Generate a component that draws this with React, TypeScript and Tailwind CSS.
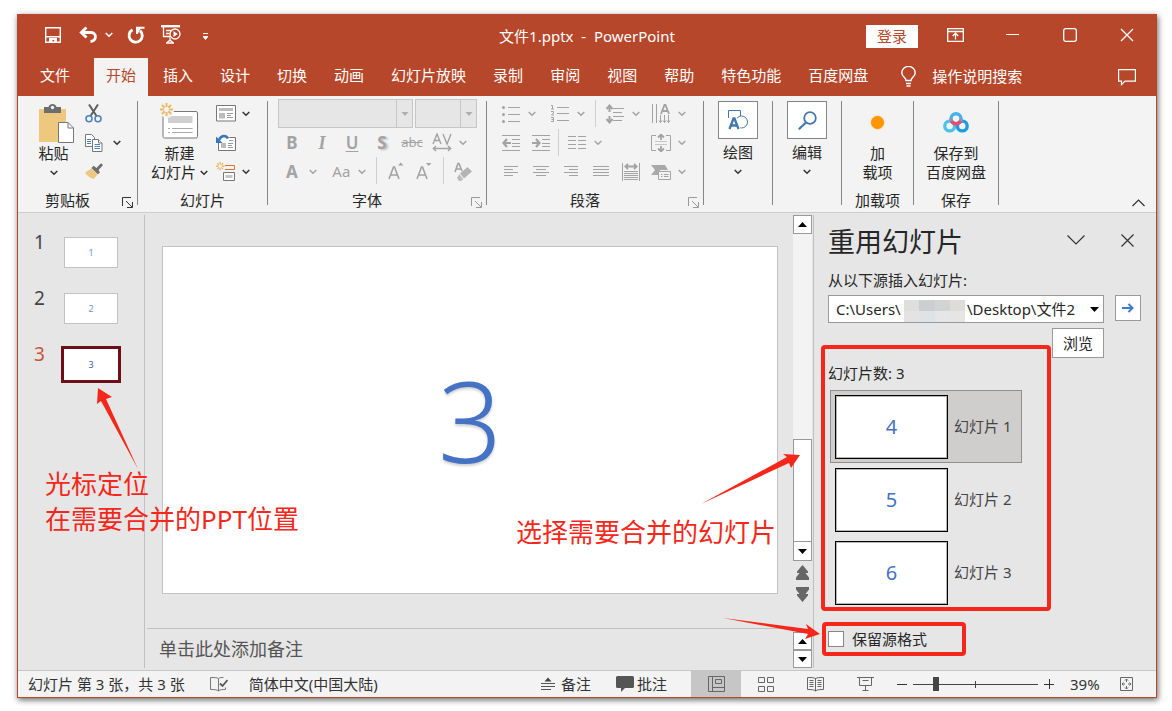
import React from 'react';

type IconProps = { className?: string };

const tabs = ['插入', '设计', '切换', '动画', '幻灯片放映', '录制', '审阅', '视图', '帮助', '特色功能', '百度网盘'];
const thumbnails = [1, 2, 3];
const sourceSlides = [
  { digit: 4, label: '幻灯片 1', selected: true },
  { digit: 5, label: '幻灯片 2', selected: false },
  { digit: 6, label: '幻灯片 3', selected: false },
];
const sourcePath = 'C:\\Users\\' + '\u00a0'.repeat(17) + '\\Desktop\\文件2';

const Chevron: React.FC<IconProps> = ({ className = 'text-[#333]' }) => (
  <svg className={className} width="8" height="6" viewBox="0 0 8 6" fill="none" stroke="currentColor" strokeWidth="1.5">
    <path d="M.7 1 4 4.3 7.3 1" />
  </svg>
);

const Triangle: React.FC<{ up?: boolean; className?: string }> = ({ up, className = 'text-black' }) => (
  <svg className={className} width="9" height="5" viewBox="0 0 9 5" fill="currentColor">
    <path d={up ? 'M0 5 4.5 0 9 5z' : 'M0 0h9L4.5 5z'} />
  </svg>
);

const Launcher: React.FC<IconProps> = ({ className }) => (
  <svg className={className} width="11" height="11" viewBox="0 0 11 11" fill="none" stroke="currentColor">
    <path d="M.5 9V.5H9M4 4l6 6M10.5 5v5.5H5" />
  </svg>
);

const SaveIcon = () => (
  <svg width="16" height="16" viewBox="0 0 16 16" fill="none" stroke="#fff" strokeWidth="1.4">
    <path d="M.7.7h14.6v14.6H.7zM1 9.8h14" />
    <path d="M4 11h8v4.5H9.2v-2.500H7.5v2.500H4z" fill="#fff" stroke="none" />
  </svg>
);

const UndoIcon = () => (
  <svg width="19" height="17" viewBox="0 0 19 17" fill="none" stroke="#fff" strokeWidth="2.8">
    <path d="M2 6.5h10c6 0 6 8.5-.5 9" />
    <path d="M7.5 1.5 2.3 6.5l5.2 5" />
  </svg>
);

const RedoIcon = () => (
  <svg width="18" height="18" viewBox="0 0 18 18" fill="none" stroke="#fff" strokeWidth="2.8">
    <path d="M5.5 3.8A6.600 6.600 0 1 0 13 4.600" />
    <path d="M9 .8h8.500v2H13.500L10.800 8H9z" fill="#fff" stroke="none" />
  </svg>
);

const PresentIcon = () => (
  <svg width="20" height="19" viewBox="0 0 20 19" fill="none" stroke="#fff" strokeWidth="1.3">
    <path d="M0 1.2h19" strokeWidth="2.4" />
    <path d="M2.5 2v9.5H9M5 5.5h6M5 8.5h3.500M5 18h8M9 12.5v4M6 17.5l3-2.500 3 2.500" />
    <circle cx="14" cy="9" r="5" />
    <path d="M12.5 6v6l4.200-3z" fill="#fff" stroke="none" />
  </svg>
);

const ClipboardIcon = () => (
  <svg width="35" height="40" viewBox="0 0 35 40">
    <path d="M0 5h27v33H0z" fill="#edc87e" />
    <path d="M5 3h4.500a4.200 4.200 0 0 1 8 0H22v6H5z" fill="#6d6d6d" />
    <circle cx="13.5" cy="3.5" r="1.7" fill="#f3f3f3" />
    <path d="M19.5 18.5H29l5.500 5.500v14.500h-15z" fill="#fff" stroke="#777" />
    <path d="M29 18.5V24h5.500" fill="none" stroke="#777" />
  </svg>
);

const ScissorsIcon = () => (
  <svg width="17" height="19" viewBox="0 0 17 19" fill="none">
    <path d="M4 .5 11.5 12M13 .5 5.500 12" stroke="#5f5f5f" strokeWidth="2" />
    <circle cx="4" cy="14.8" r="3" stroke="#4a80bd" strokeWidth="1.5" />
    <circle cx="13" cy="14.8" r="3" stroke="#4a80bd" strokeWidth="1.5" />
  </svg>
);

const CopyIcon = () => (
  <svg width="18" height="18" viewBox="0 0 18 18" fill="#fff" stroke="#777">
    <path d="M.5.5h6l3 3v9h-9z" />
    <path d="M2 5.5h4M2 7.5h4M2 9.5h4" stroke="#4a80bd" />
    <path d="M7.5 5.5h6l3.500 3.500v8.500H7.500z" />
    <path d="M13.5 5.500V9H17" />
    <path d="M9.5 10.5h5.500M9.5 12.5h5.500M9.5 14.5h5.500" stroke="#4a80bd" />
  </svg>
);

const BrushIcon = () => (
  <svg width="18" height="17" viewBox="0 0 18 17">
    <path d="M0 9.5 6.500 5.500l6 6L8.500 16C5 15 2 12.500 0 9.500z" fill="#edc87e" />
    <path d="m6.500 5 2-2.200 3 2.200L15.500.7a1.500 1.500 0 0 1 2 2L13.500 7l1.500 2.500-2.200 1.800z" fill="#6d6d6d" />
  </svg>
);

const spark = 'M6.500 0v4M6.500 9v4M0 6.500h4M9 6.500h4M2 2l2.700 2.700M8.300 8.300 11 11M11 2 8.300 4.700M4.700 8.300 2 11';

const NewSlideIcon = () => (
  <svg width="38" height="41" viewBox="0 0 38 41" fill="none">
    <rect x="3" y="8.5" width="34.500" height="26.500" rx="1.5" fill="#fff" stroke="#777" />
    <path d="M8 13h24.500v7H8z" fill="#cfcfcf" />
    <path d="M8 25.5h2M12 25.5h20.500M8 29.5h2M12 29.5h20.500" stroke="#aaa" />
    <circle cx="7" cy="8" r="7" fill="#f3f3f3" />
    <path d={spark} stroke="#ecb964" strokeWidth="2" />
  </svg>
);

const LayoutIcon = () => (
  <svg width="20" height="17" viewBox="0 0 20 17" fill="none" stroke="#777">
    <path d="M.5.5h19v15.500H.5z" fill="#fff" />
    <path d="M3 3h14v3H3zM3 8h6v5.500H3z" fill="#bbb" stroke="none" />
    <path d="M11 8.5h6M11 10.5h4M11 12.5h6" stroke="#999" />
  </svg>
);

const ResetIcon = () => (
  <svg width="20" height="17" viewBox="0 0 20 17" fill="none">
    <path d="M2.5 3.500h17v13h-17z" fill="#fff" stroke="#777" />
    <path d="M5 9h5v5H5z" fill="#bbb" />
    <path d="M12 9.5h5M12 11.5h4M12 13.5h5M13 6.5h4" stroke="#999" />
    <path d="M2.5 6.500C5 .5 10 1 12 4.500" stroke="#f3f3f3" strokeWidth="4" />
    <path d="M3 6C5 .8 10 1 12 4.500" stroke="#3a76b8" strokeWidth="2.5" />
    <path d="M0 2.500V9h6.500z" fill="#3a76b8" />
  </svg>
);

const SectionIcon = () => (
  <svg width="20" height="20" viewBox="0 0 20 20" fill="none">
    <g transform="scale(.65)">
      <path d={spark} stroke="#ecb964" strokeWidth="2" />
    </g>
    <path d="M9 3.500h9.500v4H9" stroke="#d9762f" />
    <path d="M7.5 10.500h11v8h-11z" fill="#fff" stroke="#777" />
    <path d="M9.500 13h7v3h-7z" fill="#c4c4c4" />
  </svg>
);

const Lines: React.FC<{ rows: [number, number][] }> = ({ rows }) => (
  <svg width="18" height="14" viewBox="0 0 18 14" stroke="#a3a3a3">
    {rows.map(([from, to], i) => (
      <path key={i} d={`M${from} ${i * 3 + 1.5}H${to}`} />
    ))}
  </svg>
);

const BulletsIcon = () => (
  <svg width="18" height="18" viewBox="0 0 18 18" stroke="#a3a3a3">
    <path d="M6 2.5h12M6 9.5h12M6 16.5h12" />
    <g fill="#a3a3a3" stroke="none">
      <circle cx="1.5" cy="2.5" r="1.5" />
      <circle cx="1.5" cy="9.5" r="1.5" />
      <circle cx="1.5" cy="16.5" r="1.5" />
    </g>
  </svg>
);

const NumberingIcon = () => (
  <svg width="18" height="19" viewBox="0 0 18 19" fill="none" stroke="#a3a3a3">
    <path d="M6 3.5h12M6 9.5h12M6 16.5h12" />
    <path d="M0 1.5h1.500v3.500M0 5h3M0 7.5h2.500V9L.5 11H3M0 13.5h2.500v4H0M.5 15.500h2" />
  </svg>
);

const SpacingIcon = () => (
  <svg width="18" height="20" viewBox="0 0 18 20" fill="none" stroke="#a3a3a3">
    <path d="M7 4.5h11M7 8.5h9M7 12.5h11M7 16.5h9" />
    <path d="M3.5 3v5M.5 5l3-3.500 3 3.500M3.5 12v5M.5 15l3 3.500 3-3.500" strokeWidth="2" />
  </svg>
);

const DirectionIcon = () => (
  <svg width="20" height="20" viewBox="0 0 20 20" fill="none" stroke="#a3a3a3">
    <path d="M1.5 0v19M5.5 0v19M9.5 11v8M13.5 11v8M17.5 11v8M8 16.5l1.500 2 1.500-2M12 16.5l1.500 2 1.500-2M16 16.5l1.500 2 1.500-2" />
    <path d="m10 10 3.500-9h1L18 10M11.5 7h5" strokeWidth="1.8" />
  </svg>
);

const IndentIcon: React.FC<{ out?: boolean }> = ({ out }) => (
  <svg width="18" height="16" viewBox="0 0 18 16" fill="none" stroke="#a3a3a3">
    <path d="M0 .5h18M10 4.5h8M10 8.5h8M10 11.5h8M0 15.5h18" />
    <path d={out ? 'M9 8H1.500M5 4 1.500 8 5 12' : 'M0 8h7.500M4 4l3.500 4L4 12'} strokeWidth="2.2" />
  </svg>
);

const ColumnsIcon = () => (
  <svg width="18" height="14" viewBox="0 0 18 14" stroke="#a3a3a3">
    <path d="M0 .5h8M10 .5h8M0 4.5h8M10 4.5h8M0 8.5h8M10 8.5h8M0 12.5h8M10 12.5h8" />
  </svg>
);

const AlignTextIcon = () => (
  <svg width="20" height="18" viewBox="0 0 20 18" fill="none" stroke="#a3a3a3">
    <path d="M5 1.5H.5v15H5M15 1.5h4.500v15H15" />
    <path d="M4 7.5h12M4 10.5h12" stroke="#c6c6c6" />
    <path d="M10 1v5M10 12v5M7 3.500l3-3 3 3M7 14.500l3 3 3-3" strokeWidth="1.8" />
  </svg>
);

const DistributeIcon = () => (
  <svg width="18" height="18" viewBox="0 0 18 18" fill="none" stroke="#a3a3a3">
    <path d="M.5 0v18M17.5 0v18M2 8.5h14M2 10.5h14M2 12.5h14M2 14.5h14M2 16.5h14" />
    <path d="M3.500 3.500h11M6 .8 3.300 3.500 6 6.200M12 .8l2.700 2.700L12 6.200" strokeWidth="1.8" />
  </svg>
);

const SmartArtIcon = () => (
  <svg width="20" height="16" viewBox="0 0 20 16" fill="none" stroke="#a3a3a3">
    <path d="M0 1h14l3 5H9v5H0l4-5z" fill="#a9a9a9" stroke="none" />
    <path d="M7.5 7.500h12v8h-12z" fill="#f3f3f3" />
    <path d="M10 10.5h1.500M13 10.5h4.500M10 12.5h1.500M13 12.5h4.500" />
  </svg>
);

const EraserIcon = () => (
  <svg width="18" height="20" viewBox="0 0 18 20" fill="none">
    <path d="m1 10 3-8.500h1L8 9M2.300 7h4.500" stroke="#a3a3a3" strokeWidth="1.6" />
    <path d="m6 11.500 7.500-6.500 4.500 4.500-8 7z" fill="#b4b4b4" />
    <path d="m5.200 12.200 4 5-2 1.800H5l-2-3z" fill="#bcbcbc" />
  </svg>
);

const ShapesIcon = () => (
  <svg width="20" height="20" viewBox="0 0 20 20" fill="none" stroke="#4477ac">
    <path d="M.5 8V.5h12V6" />
    <circle cx="13.500" cy="12" r="6" fill="#fff" />
    <path d="m1.500 19 4-10.500h1l4 10.500M3 15.500h6" stroke="#fff" strokeWidth="4.5" />
    <path d="m1.500 19 4-10.500h1l4 10.500M3 15.500h6" strokeWidth="2.3" />
  </svg>
);

const SearchIcon = () => (
  <svg width="19" height="19" viewBox="0 0 19 19" fill="none" stroke="#4477ac" strokeWidth="1.8">
    <circle cx="12" cy="7" r="5.8" />
    <path d="M8 11.500.8 18.200" strokeWidth="2.2" />
  </svg>
);

const NetdiskIcon = () => (
  <svg width="26" height="21" viewBox="0 0 26 21" fill="none" strokeWidth="3.4">
    <circle cx="6.700" cy="14" r="4.900" stroke="#4cc3ec" />
    <circle cx="19.300" cy="14" r="4.900" stroke="#1f9be3" />
    <circle cx="13" cy="6.800" r="5" stroke="#45b3ea" />
    <path d="M8.500 9a5 5 0 0 0 9 0" stroke="#ee4b68" />
    <path d="M8 6.800a5 5 0 0 0 .5 2.200M17.500 9a5 5 0 0 0 .5-2.200" stroke="#a487b8" />
  </svg>
);

const DoubleArrow: React.FC<{ up?: boolean }> = ({ up }) => (
  <svg width="13" height="16" viewBox="0 0 13 16" fill="#666">
    <path
      d={
        up
          ? 'M6.500 0 12 6.500V8H9.500l3.500 4.500V15H0v-2.500L3.500 8H1V6.500z'
          : 'M6.500 16 12 9.500V8H9.500L13 3.500V1H0v2.500L3.500 8H1v1.500z'
      }
    />
  </svg>
);

const Divider = () => <span className="my-[5px] w-px shrink-0 bg-[#868686]" />;

const Separator = () => <span className="mx-[5px] h-[27px] w-px bg-[#cfcfcf]" />;

const Cell: React.FC<{ label: string; drop?: boolean; children: React.ReactNode }> = ({ label, drop, children }) => (
  <button type="button" aria-label={label} className="flex h-[29px] items-center text-[#a3a3a3]">
    <span className="flex w-7 justify-center">{children}</span>
    {drop && (
      <span className="flex w-[14px] justify-center">
        <Chevron className="text-[#a3a3a3]" />
      </span>
    )}
  </button>
);

const Group: React.FC<{ label?: string; launcher?: string; className: string; children: React.ReactNode }> = ({
  label,
  launcher,
  className,
  children,
}) => (
  <div className={className + ' flex shrink-0 flex-col'}>
    <div className="flex h-[94px] justify-center">{children}</div>
    <div className="flex h-5 items-center">
      <span className="flex-1 text-center">{label}</span>
      {launcher && (
        <button type="button" aria-label={label + '设置'} className={launcher + ' flex w-5 justify-center pt-1'}>
          <Launcher />
        </button>
      )}
    </div>
  </div>
);

const TitleBar = () => (
  <header className="grid h-[43px] grid-cols-[1fr_auto_1fr] items-center bg-[#b7472a] pb-1 text-white">
    <div className="flex items-center pl-[27px]">
      <button type="button" aria-label="保存"><SaveIcon /></button>
      <button type="button" aria-label="撤消" className="ml-[18px]"><UndoIcon /></button>
      <button type="button" aria-label="撤消列表" className="ml-[7px]"><Chevron className="text-white" /></button>
      <button type="button" aria-label="重做" className="ml-[14px]"><RedoIcon /></button>
      <button type="button" aria-label="从头开始放映" className="ml-4"><PresentIcon /></button>
      <button type="button" aria-label="自定义快速访问工具栏" className="ml-[22px] pt-1">
        <svg width="5" height="7" viewBox="0 0 5 7" fill="#fff">
          <path d="M0 0h5v1H0zM0 3h5v1L2.500 7 0 4z" />
        </svg>
      </button>
    </div>
    <h1 className="pt-[3px] whitespace-pre">文件1.pptx  -  PowerPoint</h1>
    <div className="flex items-center justify-end pr-[22px]">
      <button type="button" className="mt-1 mr-[29px] h-[23px] w-[52px] bg-white leading-[23px] text-[#b7472a]">登录</button>
      <button type="button" aria-label="功能区显示选项" className="mr-[42px]">
        <svg width="17" height="14" viewBox="0 0 17 14" fill="none" stroke="#fff" strokeWidth="1.3">
          <path d="M.7.7h15.600v12.600H.7zM1 3.500h15M8.500 11.500v-6M5.700 8l2.800-2.800L11.300 8" />
        </svg>
      </button>
      <button type="button" aria-label="最小化" className="mr-[44px]">
        <svg width="13" height="14" viewBox="0 0 13 14" stroke="#fff"><path d="M0 6.500h13" /></svg>
      </button>
      <button type="button" aria-label="最大化" className="mr-[43px]">
        <svg width="14" height="14" viewBox="0 0 14 14" fill="none" stroke="#fff" strokeWidth="1.3">
          <rect x=".7" y=".7" width="12.600" height="12.600" rx="2" />
        </svg>
      </button>
      <button type="button" aria-label="关闭">
        <svg width="14" height="14" viewBox="0 0 14 14" stroke="#fff" strokeWidth="1.3"><path d="m1 1 12 12M13 1 1 13" /></svg>
      </button>
    </div>
  </header>
);

const TabBar = () => (
  <nav className="flex h-[38px] items-stretch bg-[#b7472a] pl-[10px] text-white">
    <button type="button" className="mr-3 px-3 pb-[3px]">文件</button>
    <button type="button" className="mr-[3px] bg-[#f3f3f3] px-3 pb-[3px] text-[#b7472a]">开始</button>
    {tabs.map((tab) => (
      <button key={tab} type="button" className="mr-[3px] px-3 pb-[3px] whitespace-nowrap">{tab}</button>
    ))}
    <button type="button" className="ml-[18px] flex items-center gap-4 pb-0.5 whitespace-nowrap">
      <svg width="15" height="21" viewBox="0 0 15 21" fill="none" stroke="#fff" strokeWidth="1.4">
        <path d="M5 14.500c0-3-4.200-3.500-4.200-7.800a6.700 6.300 0 0 1 13.400 0c0 4.300-4.200 4.800-4.200 7.800zM5 17.500h5M5.500 20h4" />
      </svg>
      操作说明搜索
    </button>
    <button type="button" aria-label="批注" className="mr-5 ml-auto">
      <svg width="18" height="17" viewBox="0 0 18 17" fill="none" stroke="#fff" strokeWidth="1.2">
        <path d="M.6.6h16.800v11.500H7L3.500 15.500v-3.400H.6z" />
      </svg>
    </button>
  </nav>
);

const FontGroup = () => (
  <Group label="字体" launcher="text-[#999]" className="w-[218px]">
    <div className="w-full pt-[3px] pr-[9px] pl-[10px]">
      <div className="flex h-[29px] gap-0.5">
        <button type="button" aria-label="字体" className="flex flex-1 justify-end border border-[#c6c6c6] bg-[#e6e6e6]">
          <span className="flex h-full w-4 items-center justify-center border-l border-[#c6c6c6]">
            <Triangle className="h-1 w-2 text-[#b0b0b0]" />
          </span>
        </button>
        <button type="button" aria-label="字号" className="flex w-[62px] justify-end border border-[#c6c6c6] bg-[#e6e6e6]">
          <span className="flex h-full w-4 items-center justify-center border-l border-[#c6c6c6]">
            <Triangle className="h-1 w-2 text-[#b0b0b0]" />
          </span>
        </button>
      </div>
      <div className="flex gap-0.5 text-[17px]">
        <Cell label="加粗"><b>B</b></Cell>
        <Cell label="倾斜"><i className="font-['Liberation_Serif'] text-lg font-bold">I</i></Cell>
        <Cell label="下划线"><b className="font-semibold underline underline-offset-2">U</b></Cell>
        <Cell label="文字阴影"><b className="[text-shadow:2px_1px_2px_#bbb]">S</b></Cell>
        <Cell label="删除线"><s className="text-[13px]">abc</s></Cell>
        <Cell label="字符间距" drop>
          <svg width="20" height="19" viewBox="0 0 20 19" fill="none" stroke="#a3a3a3" strokeWidth="1.4">
            <path d="m1 11 4-10 4 10M2.300 7.500h5.400M11 1l4 10 4-10M1 15.500h18M4 13l-2.700 2.500L4 18M16 13l2.700 2.500L16 18" />
          </svg>
        </Cell>
      </div>
      <div className="flex text-[17px]">
        <Cell label="字体颜色" drop><b>A</b></Cell>
        <span className="w-2" />
        <Cell label="更改大小写" drop><span className="text-[15px]">Aa</span></Cell>
        <span className="w-0.5" />
        <Separator />
        <Cell label="增大字号">
          <svg width="16" height="19" viewBox="0 0 16 19" fill="none" stroke="#a3a3a3" strokeWidth="1.6">
            <path d="m1 17 4.500-12h1L11 17M2.500 13h7" />
            <path d="M10 3.500h5.500L12.700.5z" fill="#a3a3a3" stroke="none" />
          </svg>
        </Cell>
        <Cell label="减小字号">
          <svg width="16" height="19" viewBox="0 0 16 19" fill="none" stroke="#a3a3a3" strokeWidth="1.6">
            <path d="m1 17 4.500-12h1L11 17M2.500 13h7" />
            <path d="M10 1h5.500l-2.800 3z" fill="#a3a3a3" stroke="none" />
          </svg>
        </Cell>
        <Separator />
        <Cell label="清除格式"><EraserIcon /></Cell>
      </div>
    </div>
  </Group>
);

const ParagraphGroup = () => (
  <Group label="段落" launcher="text-[#999]" className="w-[216px]">
    <div className="flex w-full justify-between pt-[3px] pr-[14px] pl-[10px]">
      <div>
        <div className="flex items-center">
          <Cell label="项目符号" drop><BulletsIcon /></Cell>
          <span className="w-[7px]" />
          <Cell label="编号" drop><NumberingIcon /></Cell>
          <span className="w-0.5" />
          <Separator />
          <Cell label="行距" drop><SpacingIcon /></Cell>
        </div>
        <div className="flex items-center">
          <Cell label="降低列表级别"><IndentIcon out /></Cell>
          <span className="w-0.5" />
          <Cell label="提高列表级别"><IndentIcon /></Cell>
          <span className="ml-[3px] h-[27px] w-px bg-[#cfcfcf]" />
          <span className="w-1" />
          <Cell label="分栏" drop><ColumnsIcon /></Cell>
        </div>
        <div className="flex items-center gap-0.5">
          <Cell label="左对齐"><Lines rows={[[2, 16], [2, 11], [2, 16], [2, 11]]} /></Cell>
          <Cell label="居中"><Lines rows={[[1, 17], [4, 14], [1, 17], [4, 14]]} /></Cell>
          <Cell label="右对齐"><Lines rows={[[2, 16], [7, 16], [2, 16], [7, 16]]} /></Cell>
          <Cell label="两端对齐"><Lines rows={[[1, 17], [1, 17], [1, 17], [1, 17]]} /></Cell>
          <Cell label="分散对齐"><DistributeIcon /></Cell>
        </div>
      </div>
      <div>
        <Cell label="文字方向" drop><DirectionIcon /></Cell>
        <Cell label="对齐文本" drop><AlignTextIcon /></Cell>
        <Cell label="转换为 SmartArt" drop><SmartArtIcon /></Cell>
      </div>
    </div>
  </Group>
);

const Ribbon = () => (
  <div className="flex border-b border-[#cdcdcd] bg-[#f3f3f3] pb-0.5 leading-[19px]">
    <Group label="剪贴板" launcher="text-[#333]" className="w-[119px]">
      <button type="button" className="flex w-[38px] flex-col items-center">
        <span className="flex h-12 items-end pl-[6px]"><ClipboardIcon /></span>
        粘贴
        <span className="flex h-[19px] items-center"><Chevron /></span>
      </button>
      <div className="ml-3 flex w-9 flex-col pt-[3px]">
        <button type="button" aria-label="剪切" className="flex h-[29px] items-center"><ScissorsIcon /></button>
        <button type="button" aria-label="复制" className="flex h-[29px] items-center justify-between"><CopyIcon /><Chevron /></button>
        <button type="button" aria-label="格式刷" className="flex h-[29px] items-center"><BrushIcon /></button>
      </div>
    </Group>
    <Divider />
    <Group label="幻灯片" className="w-[129px]">
      <button type="button" className="flex flex-col items-center">
        <span className="flex h-12 items-end"><NewSlideIcon /></span>
        新建
        <span className="flex items-center gap-1">幻灯片<Chevron /></span>
      </button>
      <div className="mr-1 ml-2 flex w-[34px] flex-col pt-[3px]">
        <button type="button" aria-label="版式" className="flex h-[29px] items-center justify-between"><LayoutIcon /><Chevron /></button>
        <button type="button" aria-label="重置" className="flex h-[29px] items-center"><ResetIcon /></button>
        <button type="button" aria-label="节" className="flex h-[29px] items-center justify-between"><SectionIcon /><Chevron /></button>
      </div>
    </Group>
    <Divider />
    <FontGroup />
    <Divider />
    <ParagraphGroup />
    <Divider />
    <Group className="w-[68px]">
      <button type="button" className="flex flex-col items-center pt-[5px]">
        <span className="mb-1 flex h-[38px] w-10 items-center justify-center border border-[#868686] bg-white"><ShapesIcon /></span>
        绘图
        <span className="flex h-[19px] items-center"><Chevron /></span>
      </button>
    </Group>
    <Divider />
    <Group className="w-[68px]">
      <button type="button" className="flex flex-col items-center pt-[5px]">
        <span className="mb-1 flex h-[38px] w-10 items-center justify-center border border-[#868686] bg-white"><SearchIcon /></span>
        编辑
        <span className="flex h-[19px] items-center"><Chevron /></span>
      </button>
    </Group>
    <Divider />
    <Group label="加载项" className="w-[71px]">
      <button type="button" className="flex flex-col items-center">
        <span className="flex h-12 items-center pt-1">
          <span className="h-[13px] w-[13px] rounded-full bg-[#ff9500] shadow-[0_0_2px_#ffb95c]" />
        </span>
        <span>加<br />载项</span>
      </button>
    </Group>
    <Divider />
    <Group label="保存" className="w-[84px]">
      <button type="button" className="flex flex-col items-center">
        <span className="flex h-12 items-center pt-1"><NetdiskIcon /></span>
        <span>保存到<br />百度网盘</span>
      </button>
    </Group>
    <Divider />
    <button type="button" aria-label="折叠功能区" className="mr-[11px] ml-auto self-end pb-[3px]">
      <svg width="13" height="8" viewBox="0 0 13 8" fill="none" stroke="#333" strokeWidth="1.2"><path d="m.5 7 6-6 6 6" /></svg>
    </button>
  </div>
);

const ThumbnailPane = () => (
  <aside className="my-0.5 w-[127px] shrink-0 border-r border-[#c0c0c0] pt-[19px] pl-4">
    {thumbnails.map((n) => (
      <div key={n} className="flex h-14 items-start">
        <span className={(n === 3 ? 'text-[#c8553a]' : 'text-[#444]') + ' w-[9px] text-[19px] leading-[17px]'}>{n}</span>
        {n === 3 ? (
          <button type="button" className="ml-[18px] h-[37px] w-[60px] border-3 border-[#6d0f17] bg-white text-[9px] text-[#3a5da8]">{n}</button>
        ) : (
          <button type="button" className="mt-[3px] ml-[21px] h-[31px] w-[54px] border border-[#c3c3c3] bg-white text-[9px] text-[#6f94cf]">{n}</button>
        )}
      </div>
    ))}
  </aside>
);

const scrollButton = 'flex w-full shrink-0 items-center justify-center border border-[#999] bg-white';

const Editor = () => (
  <main className="flex min-w-0 flex-1 py-0.5">
    <div className="flex min-w-0 flex-1 flex-col pl-0.5">
      <div className="flex flex-1 items-center px-[15px] pb-[3px]">
        <div className="flex aspect-[615/347] w-full items-center justify-center border border-[#c3c3c3] bg-white">
          <span className="font-['Noto_Sans'] text-[112px] leading-none font-light text-[#4472c4] [text-shadow:0_2px_3px_#0003]">3</span>
        </div>
      </div>
      <div className="flex h-10 items-center border-t border-[#c0c0c0] pl-3 text-lg text-[#555]">单击此处添加备注</div>
    </div>
    <div className="flex w-[19px] flex-col">
      <button type="button" aria-label="向上滚动" className={scrollButton + ' h-[19px]'}><Triangle up /></button>
      <div className="flex flex-1 flex-col justify-end bg-[#f3f3f3]">
        <div className="h-[103px] border border-[#999] bg-white" />
      </div>
      <button type="button" aria-label="向下滚动" className={scrollButton + ' -mt-px h-5'}><Triangle /></button>
      <div className="flex h-[71px] flex-col items-center gap-[5px] pt-1">
        <button type="button" aria-label="上一张幻灯片"><DoubleArrow up /></button>
        <button type="button" aria-label="下一张幻灯片"><DoubleArrow /></button>
      </div>
      <button type="button" aria-label="备注向上滚动" className={scrollButton + ' h-[18px]'}><Triangle up /></button>
      <button type="button" aria-label="备注向下滚动" className={scrollButton + ' h-[18px]'}><Triangle /></button>
    </div>
  </main>
);

const ReusePane = () => (
  <aside className="my-0.5 ml-px w-[343px] shrink-0 border-l border-[#c0c0c0] pl-[14px]">
    <div className="flex h-[50px] items-center pr-[22px]">
      <h2 className="flex-1 pt-1 text-[27px] leading-8">重用幻灯片</h2>
      <button type="button" aria-label="任务窗格选项">
        <svg width="18" height="10" viewBox="0 0 18 10" fill="none" stroke="#333" strokeWidth="1.2"><path d="m.5.5 8.500 8.500L17.500.5" /></svg>
      </button>
      <button type="button" aria-label="关闭窗格" className="ml-9">
        <svg width="13" height="13" viewBox="0 0 13 13" stroke="#333" strokeWidth="1.2"><path d="m.5.5 12 12M12.500.5l-12 12" /></svg>
      </button>
    </div>
    <label htmlFor="source" className="block h-[30px] leading-[30px]">从以下源插入幻灯片:</label>
    <div className="flex gap-[11px]">
      <div className="relative flex h-7 w-[276px] border border-[#999] bg-white">
        <input id="source" defaultValue={sourcePath} className="min-w-0 flex-1 bg-transparent pl-[7px] outline-none" />
        <button type="button" aria-label="最近使用的源" className="flex w-[18px] items-center justify-center"><Triangle /></button>
        <div className="absolute top-1 left-[75px] grid h-[22px] w-[61px] grid-cols-4">
          <span className="bg-[#dfdede]" />
          <span className="bg-[#cdcecf]" />
          <span className="bg-[#d2d3d3]" />
          <span className="bg-[#dddcdb]" />
          <span className="bg-[#e4e3e3]" />
          <span className="bg-[#e0e3e6]" />
          <span className="bg-[#e5e6e8]" />
          <span className="bg-[#e6e5e4]" />
        </div>
      </div>
      <button type="button" aria-label="转到" className="flex h-[26px] w-[26px] items-center justify-center border border-[#999] bg-white">
        <svg width="12" height="10" viewBox="0 0 12 10" fill="none" stroke="#3f7cbf" strokeWidth="2"><path d="M0 5h10.500M6.500 1l4 4-4 4" /></svg>
      </button>
    </div>
    <button type="button" className="mt-[5px] ml-[224px] block h-[30px] w-[52px] border border-[#999] bg-white">浏览</button>
    <section className="relative w-[194px]">
      <div className="h-8 leading-[30px]">幻灯片数: 3</div>
      {sourceSlides.map((slide) => (
        <button
          key={slide.label}
          type="button"
          className={
            (slide.selected ? 'border-[#8f8f8f] bg-[#d0cecc]' : 'border-transparent') +
            ' ml-0.5 flex h-[73px] w-[192px] items-center gap-1.5 border px-1 text-[#444]'
          }
        >
          <span className="flex h-16 w-[113px] items-center justify-center border border-black bg-white text-[20px] text-[#4472c4] inset-ring inset-ring-[#b5b5b5]">
            {slide.digit}
          </span>
          {slide.label}
        </button>
      ))}
      <span className="pointer-events-none absolute -top-[13px] -right-[29px] -bottom-[2px] -left-[7px] rounded border-4 border-[#f5271a]" />
    </section>
    <label className="relative mt-[17px] flex h-[26px] w-[134px] items-center gap-2">
      <input type="checkbox" className="h-4 w-4 appearance-none border border-[#868686] bg-white" />
      保留源格式
      <span className="pointer-events-none absolute -inset-y-1 -right-1 -left-[6px] rounded border-4 border-[#f5271a]" />
    </label>
  </aside>
);

const StatusBar = () => (
  <footer className="flex h-[27px] items-center border-t border-[#c6c6c6] bg-[#f3f3f3] pl-[10px] text-[#333]">
    <span className="whitespace-nowrap">幻灯片 第 3 张，共 3 张</span>
    <button type="button" aria-label="拼写检查" className="ml-[25px]">
      <svg width="18" height="16" viewBox="0 0 18 16" fill="none" stroke="#777">
        <path d="M8.500 2.500C7 1.500 4 1.500.5 1.500v12c3.500 0 6.500 0 8 1.500zc1-1 3-1 5-1M8.500 15c1.500-1.500 3.500-1.500 7-1.500v-2" />
        <path d="m10 7.500 2.500 2.500 5-6" stroke="#555" strokeWidth="1.8" />
      </svg>
    </button>
    <span className="ml-[21px] whitespace-nowrap">简体中文(中国大陆)</span>
    <div className="ml-auto flex h-full items-center">
      <button type="button" className="flex items-center gap-[6px] whitespace-nowrap">
        <svg width="14" height="14" viewBox="0 0 14 14" stroke="#555">
          <path d="M0 6.5h14M0 9.5h14M0 12.5h10" />
          <path d="M3.500 4.500 7 .5l3.500 4z" fill="#444" stroke="none" />
        </svg>
        备注
      </button>
      <button type="button" className="ml-[25px] flex items-center gap-[3px] whitespace-nowrap">
        <svg width="18" height="16" viewBox="0 0 18 16" fill="#555">
          <path d="M1.500 0h15A1.500 1.500 0 0 1 18 1.500v9a1.500 1.500 0 0 1-1.500 1.500H9l-4 4v-4H1.500A1.500 1.500 0 0 1 0 10.500v-9A1.500 1.500 0 0 1 1.500 0z" />
        </svg>
        批注
      </button>
      <button type="button" aria-label="普通视图" className="ml-6 flex h-full w-[50px] items-center justify-center bg-[#c6c6c6]">
        <svg width="17" height="16" viewBox="0 0 17 16" fill="none" stroke="#666">
          <path d="M.5.5h16v15H.5zM4.5.5v15M4.500 11.500h12M7.500 3.500h6v4h-6z" />
        </svg>
      </button>
      <button type="button" aria-label="幻灯片浏览" className="flex w-[49px] justify-center">
        <svg width="16" height="15" viewBox="0 0 16 15" fill="none" stroke="#666">
          <path d="M.5.5h6v5h-6zM9.500.5h6v5h-6zM.5 9.500h6v5h-6zM9.500 9.500h6v5h-6z" />
        </svg>
      </button>
      <button type="button" aria-label="阅读视图" className="flex w-[50px] justify-center">
        <svg width="17" height="15" viewBox="0 0 17 15" fill="none" stroke="#666">
          <path d="M8.500 1.500C7 .5 4 .5.5.5v12c3.500 0 6.500 0 8 1.500 1.500-1.500 4.500-1.500 8-1.500V.5c-3.500 0-6.500 0-8 1zM8.500 1v13M2.500 3.500h4M2.500 5.500h4M2.500 7.500h4M2.500 9.500h4M10.500 3.500h4M10.500 5.500h4M10.500 7.500h4M10.500 9.500h4" />
        </svg>
      </button>
      <button type="button" aria-label="幻灯片放映" className="flex w-[50px] justify-center">
        <svg width="17" height="16" viewBox="0 0 17 16" fill="none" stroke="#666">
          <path d="M0 1.500h17M2.500 1.500v8h12v-8M5.500 4.500h6M8.500 9.500v5M5.500 14.500h6" />
        </svg>
      </button>
      <button type="button" aria-label="缩小" className="ml-[7px]">
        <svg width="10" height="10" viewBox="0 0 10 10" stroke="#333"><path d="M0 5.500h10" /></svg>
      </button>
      <div className="relative mx-1.5 flex h-[14px] w-[125px] items-center">
        <span className="absolute inset-x-0 top-[7px] h-px bg-[#444]" />
        <span className="absolute top-1 left-[62px] h-[7px] w-px bg-[#444]" />
        <input
          type="range"
          aria-label="缩放"
          defaultValue={17}
          className="relative h-[14px] w-full appearance-none bg-transparent [&::-webkit-slider-thumb]:h-[14px] [&::-webkit-slider-thumb]:w-[6px] [&::-webkit-slider-thumb]:appearance-none [&::-webkit-slider-thumb]:bg-[#444]"
        />
      </div>
      <button type="button" aria-label="放大">
        <svg width="10" height="10" viewBox="0 0 10 10" stroke="#333"><path d="M0 5.500h10M5.500 0v10" /></svg>
      </button>
      <span className="w-[66px] pl-4">39%</span>
      <button type="button" aria-label="适应窗口" className="mr-[23px]">
        <svg width="13" height="14" viewBox="0 0 13 14" fill="none" stroke="#666">
          <path d="M.5.5h12v13H.5zM6.500 2v3M6.500 9v3M2 7h3M8 7h3M5 3.500 6.500 2 8 3.500M5 10.500 6.500 12 8 10.500M3.500 5.500 2 7l1.500 1.500M9.500 5.500 11 7l-1.500 1.500" />
        </svg>
      </button>
    </div>
  </footer>
);

const Annotations = () => (
  <div className="pointer-events-none absolute inset-0 text-[26px] leading-[35px] whitespace-nowrap text-[#f5271a]">
    <svg className="absolute top-[175px] left-[79px]" width="42" height="82" viewBox="0 0 42 82" fill="currentColor">
      <path d="M1 0 15 9 9 11 41 81 4 13 0 16z" />
    </svg>
    <p className="absolute top-[254px] left-[27px]">
      光标定位
      <br />
      在需要合并的PPT位置
    </p>
    <p className="absolute top-[302px] right-[380px]">选择需要合并的幻灯片</p>
    <svg className="absolute top-[240px] right-[355px]" width="100" height="52" viewBox="0 0 100 52" fill="currentColor">
      <path d="M99 2 82 1l4 3L0 51l88-41 2 5z" />
    </svg>
    <svg className="absolute top-[404px] right-[336px]" width="97" height="24" viewBox="0 0 97 24" fill="currentColor">
      <path d="M97 17 83 7l2 5L0 1l85 16-3 5z" />
    </svg>
  </div>
);

const App: React.FC = () => {
  return (
    <div className="flex min-h-screen bg-white pt-[14px] pr-[15px] pb-[13px] pl-[17px] font-['Noto_Sans','Noto_Sans_CJK_SC',sans-serif] text-[15px] text-[#262626]">
      <div className="flex min-w-0 flex-1 flex-col border border-[#b7472a] shadow-[1px_2px_6px_#0009]">
        <TitleBar />
        <TabBar />
        <Ribbon />
        <div className="relative flex flex-1 bg-[#e6e6e6]">
          <ThumbnailPane />
          <Editor />
          <ReusePane />
          <Annotations />
        </div>
        <StatusBar />
      </div>
    </div>
  );
};

export default App;
